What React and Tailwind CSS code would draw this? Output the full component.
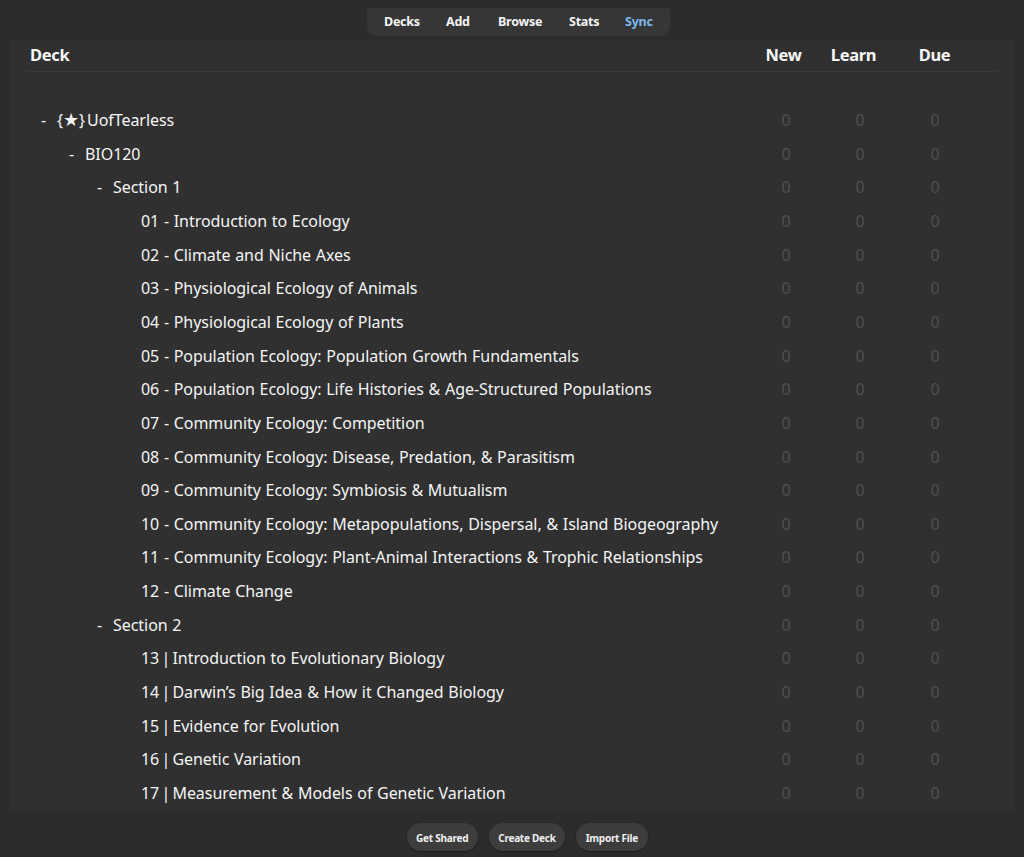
const rows = [
  { t: "{★} UofTearless", d: 0, dash: true },
  { t: "BIO120", d: 1, dash: true },
  { t: "Section 1", d: 2, dash: true },
  { t: "01 - Introduction to Ecology" },
  { t: "02 - Climate and Niche Axes" },
  { t: "03 - Physiological Ecology of Animals" },
  { t: "04 - Physiological Ecology of Plants" },
  { t: "05 - Population Ecology: Population Growth Fundamentals" },
  { t: "06 - Population Ecology: Life Histories & Age-Structured Populations" },
  { t: "07 - Community Ecology: Competition" },
  { t: "08 - Community Ecology: Disease, Predation, & Parasitism" },
  { t: "09 - Community Ecology: Symbiosis & Mutualism" },
  { t: "10 - Community Ecology: Metapopulations, Dispersal, & Island Biogeography" },
  { t: "11 - Community Ecology: Plant-Animal Interactions & Trophic Relationships" },
  { t: "12 - Climate Change" },
  { t: "Section 2", d: 2, dash: true },
  { t: "13 | Introduction to Evolutionary Biology" },
  { t: "14 | Darwin’s Big Idea & How it Changed Biology" },
  { t: "15 | Evidence for Evolution" },
  { t: "16 | Genetic Variation" },
  { t: "17 | Measurement & Models of Genetic Variation" },
];

const indent = ["pl-[31px]", "pl-[59px]", "pl-[87px]"];

function Zero({ w }) {
  return <div className={`${w} text-center text-[16px] text-[#4f4f4f]`}>0</div>;
}

function Label({ t }) {
  if (t.startsWith("{★}")) {
    return (
      <span>
        {"{"}<span className="text-[18px] leading-none">★</span>{"}"}<span className="ml-[2px]">{t.slice(4)}</span>
      </span>
    );
  }
  if (t.includes(" | ")) {
    const [a, b] = t.split(" | ");
    return (
      <span>
        {a} <span className="-mx-[2.5px]">|</span> {b}
      </span>
    );
  }
  return <span>{t}</span>;
}

function Row({ r }) {
  return (
    <div className="flex h-[33.65px] items-center">
      <div className={`flex w-[736px] min-w-0 items-center whitespace-nowrap text-[16px] tracking-[-0.05px] [word-spacing:0.6px] text-[#f5f5f5] ${r.dash ? indent[r.d] : "pl-[131px]"}`}>
        {r.dash && <span className="w-[16px] shrink-0">-</span>}
        <Label t={r.t} />
      </div>
      <Zero w="w-[80px]" />
      <Zero w="w-[68px]" />
      <Zero w="w-[82px]" />
    </div>
  );
}

export default function App() {
  return (
    <div className="flex h-[857px] w-[1024px] flex-col overflow-hidden bg-[#2c2c2c] font-['Noto_Sans','Open_Sans',sans-serif]">
      <div className="flex h-[36px] shrink-0 justify-center pt-[8px]">
        <nav className="ml-[13px] flex h-[28px] w-[303px] items-center rounded-b-[10px] rounded-t-[3px] bg-[#363636] pl-[17px] text-[12.5px] font-bold tracking-[-0.25px] text-[#f5f5f5]">
          <span className="w-[62px]">Decks</span>
          <span className="w-[52px]">Add</span>
          <span className="w-[71px]">Browse</span>
          <span className="w-[56px]">Stats</span>
          <span className="text-[#7db8f0]">Sync</span>
        </nav>
      </div>
      <main className="mx-[10px] mt-[4px] h-[772px] shrink-0 overflow-hidden bg-[#303030]">
        <header className="mx-[17px] flex h-[32px] items-center border-b border-[#3a3a3a] text-[16.5px] font-bold tracking-[-0.35px] text-[#f8f8f8]">
          <div className="w-[723px] pl-[3px]">Deck</div>
          <div className="w-[67px] text-center">New</div>
          <div className="w-[73px] text-center">Learn</div>
          <div className="w-[89px] text-center">Due</div>
        </header>
        <div className="pt-[31.3px]">
          {rows.map((r) => <Row key={r.t} r={r} />)}
        </div>
      </main>
      <footer className="flex flex-1 items-start justify-center gap-[11px] pl-[30px] pt-[11px]">
        {["Get Shared", "Create Deck", "Import File"].map((b) => (
          <button key={b} className="flex h-[28px] items-center rounded-full bg-[#3d3d3d] px-[9.5px] pt-[2px] text-[10px] font-bold tracking-[-0.25px] text-[#f0f0f0] shadow-[0_1px_2px_rgba(0,0,0,0.35)]">
            {b}
          </button>
        ))}
      </footer>
    </div>
  );
}
